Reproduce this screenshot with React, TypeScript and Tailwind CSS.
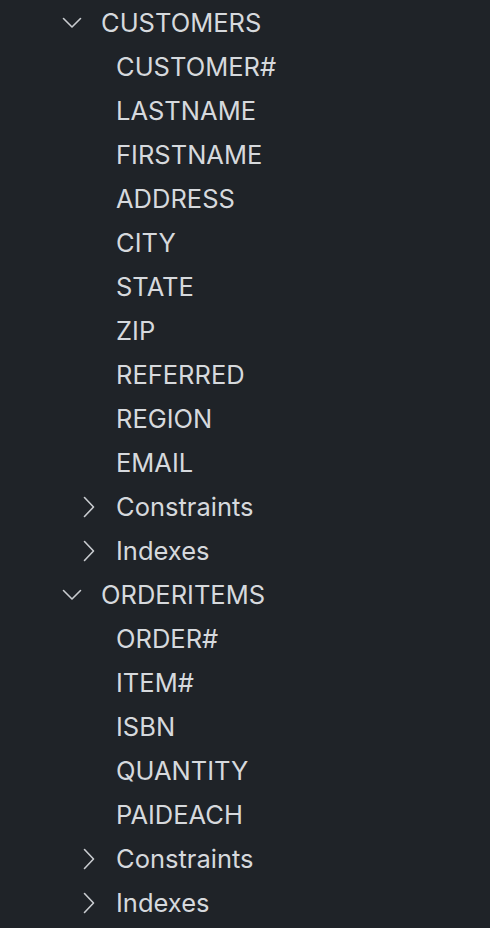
const tables = [
  { name: 'CUSTOMERS', columns: ['CUSTOMER#', 'LASTNAME', 'FIRSTNAME', 'ADDRESS', 'CITY', 'STATE', 'ZIP', 'REFERRED', 'REGION', 'EMAIL'] },
  { name: 'ORDERITEMS', columns: ['ORDER#', 'ITEM#', 'ISBN', 'QUANTITY', 'PAIDEACH'] },
];

function ChevronDown() {
  return (
    <svg width="20" height="12" viewBox="0 0 20 12" fill="none" className="shrink-0">
      <path d="M1.5 1.5 L10 10 L18.5 1.5" stroke="#c9ccd0" strokeWidth="1.6" strokeLinecap="round" strokeLinejoin="round" />
    </svg>
  );
}

function ChevronRight() {
  return (
    <svg width="12" height="22" viewBox="0 0 12 22" fill="none" className="shrink-0">
      <path d="M1.5 1.5 L10.5 11 L1.5 20.5" stroke="#c9ccd0" strokeWidth="1.6" strokeLinecap="round" strokeLinejoin="round" />
    </svg>
  );
}

export default function App() {
  return (
    <div className="min-h-screen w-full bg-[#1f2328] text-[#d6d9dd] text-[25.5px] leading-none" style={{ fontFamily: 'Inter, "Liberation Sans", sans-serif' }}>
      {tables.map((t) => (
        <div key={t.name}>
          <div className="h-[44px] flex items-center pl-[62px] pt-[1px]">
            <div className="w-[39px] flex"><ChevronDown /></div>
            <span>{t.name}</span>
          </div>
          {t.columns.map((c) => (
            <div key={c} className="h-[44px] flex items-center pl-[116px] pt-[1px]">
              <span>{c}</span>
            </div>
          ))}
          {['Constraints', 'Indexes'].map((g) => (
            <div key={g} className="h-[44px] flex items-center pl-[83px] pt-[1px]">
              <div className="w-[33px] flex"><ChevronRight /></div>
              <span>{g}</span>
            </div>
          ))}
        </div>
      ))}
    </div>
  );
}
